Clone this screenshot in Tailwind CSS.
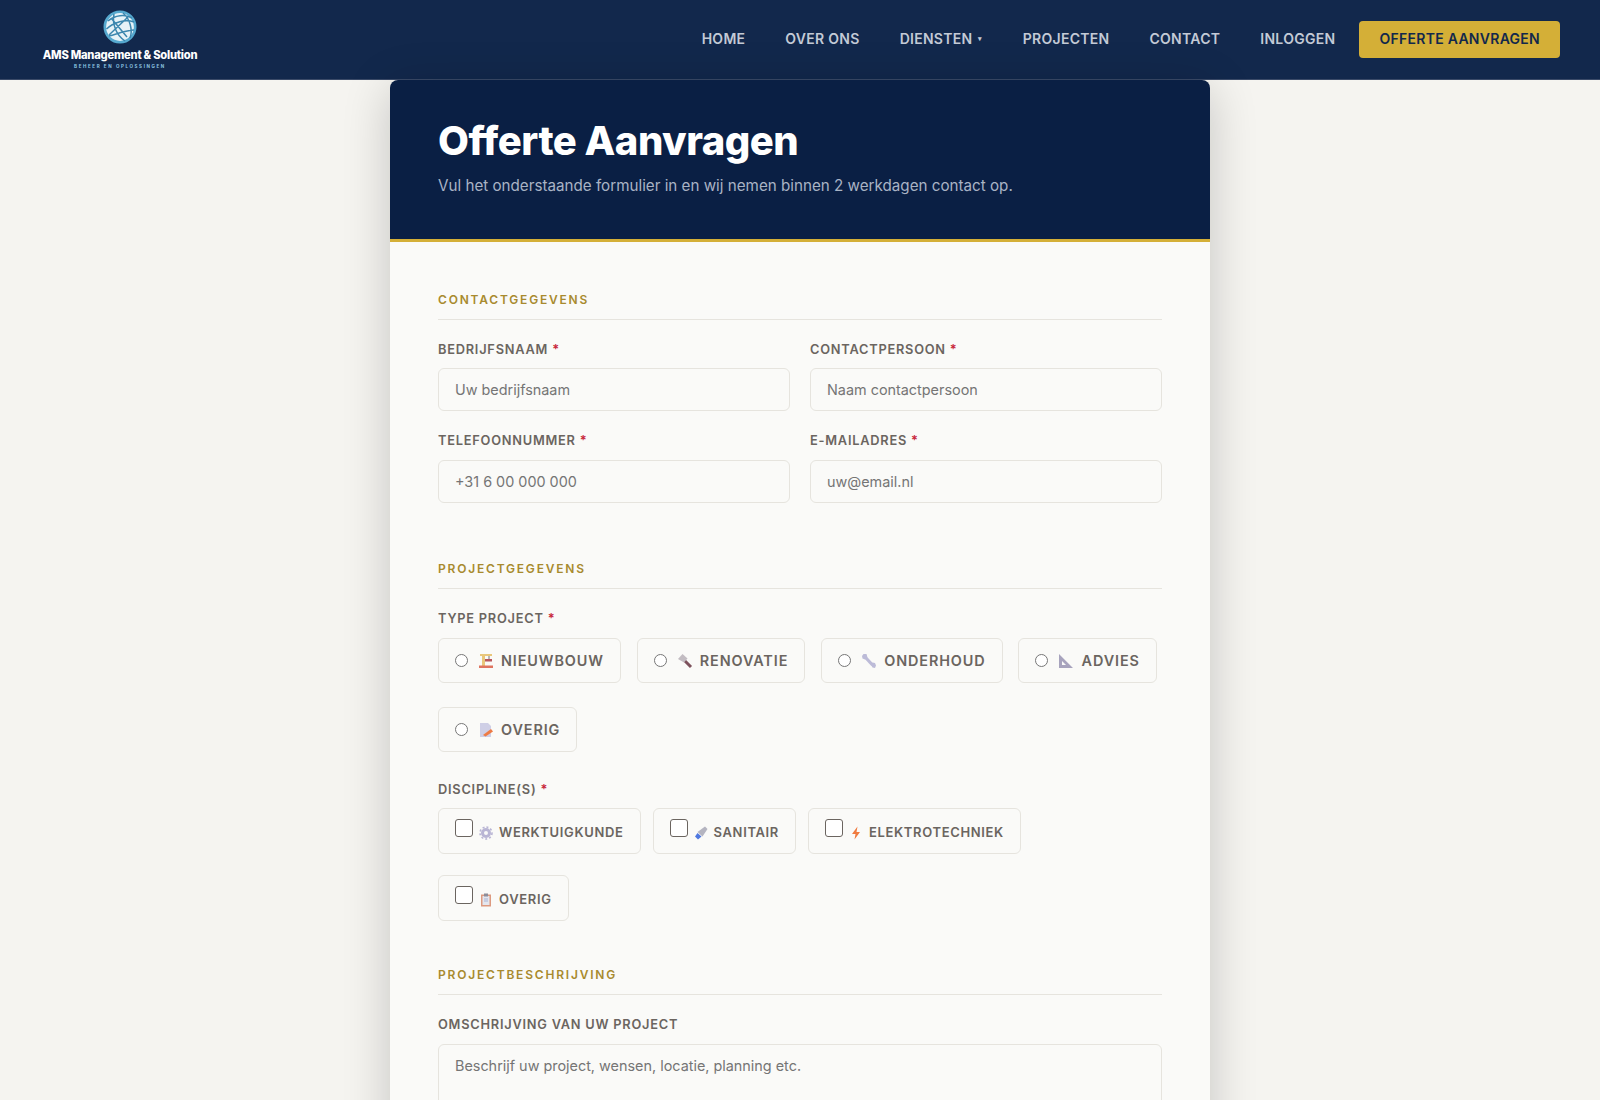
<!DOCTYPE html>
<html lang="nl">
<head>
    <meta charset="UTF-8" />
    <meta name="viewport" content="width=device-width, initial-scale=1.0" />
    <title>Offerte Aanvragen</title>
    <script src="https://cdn.jsdelivr.net/npm/@tailwindcss/browser@4"></script>
</head>
<body class="h-[1100px] overflow-hidden bg-[#f5f4f0] font-['Inter',sans-serif] text-[#6b6560]">
    <!-- Navigation -->
    <header class="h-20 bg-[#12284c] flex items-center justify-between pl-10 pr-10 border-b border-[#3a4a68]">
        <a href="#" class="block w-[160px] shrink-0 pt-[5px] text-center">
            <svg class="mx-auto block -mt-[5px]" width="34" height="34" viewBox="0 0 34 34" fill="none">
                <circle cx="17" cy="17" r="15.2" fill="#e6f2f7" stroke="#56a9cf" stroke-width="2.6" />
                <path d="M5 11C12 5 22 4 29 8M3.500 19C11 12 22 9 31 12M6 26C14 24 24 20 31 20M11 4C9 14 13 25 22 31M20 3C27 9 30 20 27 28M8 8L24 27M6 25L25 7" stroke="#3b86ae" stroke-width="1.500" />
            </svg>
            <div class="mt-[4px] text-[11.200px] leading-[14px] font-extrabold tracking-[-0.25px] text-white whitespace-nowrap">AMS Management &amp; Solution</div>
            <div class="mt-[2px] text-[4.500px] leading-[6px] font-bold tracking-[1.600px] text-[#8cc4e0] whitespace-nowrap">BEHEER EN OPLOSSINGEN</div>
        </a>
        <nav class="flex items-center gap-10 text-sm font-semibold tracking-[0.28px] text-[#c3cad6]">
            <a href="#" class="-mt-px">HOME</a>
            <a href="#" class="-mt-px">OVER ONS</a>
            <a href="#" class="-mt-px flex items-center gap-[6px]">DIENSTEN <span class="text-[7px]">▾</span></a>
            <a href="#" class="-mt-px">PROJECTEN</a>
            <a href="#" class="-mt-px">CONTACT</a>
            <a href="#" class="-mt-px">INLOGGEN</a>
            <a href="#" class="-ml-4 h-[37px] px-5 pb-px flex items-center rounded bg-[#d4af37] text-[#12284c] tracking-[0.28px]">OFFERTE AANVRAGEN</a>
        </nav>
    </header>

    <main class="w-[820px] mx-auto rounded-t-lg bg-[#fafaf8] shadow-[0_8px_48px_rgba(0,0,0,0.2)]">
        <!-- Card header -->
        <div class="h-[162px] rounded-t-lg bg-[#0a1f44] border-b-[3px] border-[#d4af37] px-12 pt-[37px]">
            <h1 class="text-[40px] leading-[48px] font-extrabold tracking-[-0.5px] text-white">Offerte Aanvragen</h1>
            <p class="mt-[9px] text-[15.200px] leading-6 text-[#a9b3c4]">Vul het onderstaande formulier in en wij nemen binnen 2 werkdagen contact op.</p>
        </div>

        <form class="px-12 pt-[50px]">
            <!-- Contactgegevens -->
            <h2 class="text-xs leading-[15px] font-semibold tracking-[1.800px] text-[#a88a2e] pb-3 border-b border-[#e6e4de]">CONTACTGEGEVENS</h2>
            <div class="mt-[22px] grid grid-cols-2 gap-x-5 gap-y-[22px]">
                <div>
                    <label class="block text-[12.800px] leading-[16px] font-semibold tracking-[0.77px] mb-[10px]">BEDRIJFSNAAM <span class="text-[#c8283c]">*</span></label>
                    <input class="block w-full h-[43px] rounded-md border border-[#e6e4de] bg-[#fafaf8] px-4 text-[14.400px] placeholder:text-[#757575]" placeholder="Uw bedrijfsnaam" />
                </div>
                <div>
                    <label class="block text-[12.800px] leading-[16px] font-semibold tracking-[0.77px] mb-[10px]">CONTACTPERSOON <span class="text-[#c8283c]">*</span></label>
                    <input class="block w-full h-[43px] rounded-md border border-[#e6e4de] bg-[#fafaf8] px-4 text-[14.400px] placeholder:text-[#757575]" placeholder="Naam contactpersoon" />
                </div>
                <div>
                    <label class="block text-[12.800px] leading-[16px] font-semibold tracking-[0.77px] mb-[11px]">TELEFOONNUMMER <span class="text-[#c8283c]">*</span></label>
                    <input class="block w-full h-[43px] rounded-md border border-[#e6e4de] bg-[#fafaf8] px-4 text-[14.400px] placeholder:text-[#757575]" placeholder="+31 6 00 000 000" />
                </div>
                <div>
                    <label class="block text-[12.800px] leading-[16px] font-semibold tracking-[0.77px] mb-[11px]">E-MAILADRES <span class="text-[#c8283c]">*</span></label>
                    <input class="block w-full h-[43px] rounded-md border border-[#e6e4de] bg-[#fafaf8] px-4 text-[14.400px] placeholder:text-[#757575]" placeholder="uw@email.nl" />
                </div>
            </div>

            <!-- Projectgegevens -->
            <h2 class="mt-[58px] text-xs leading-[15px] font-semibold tracking-[1.800px] text-[#a88a2e] pb-3 border-b border-[#e6e4de]">PROJECTGEGEVENS</h2>
            <label class="block mt-[22px] text-[12.800px] leading-[16px] font-semibold tracking-[0.77px]">TYPE PROJECT <span class="text-[#c8283c]">*</span></label>
            <div class="mt-[11px] flex flex-wrap gap-x-4 gap-y-6 text-[14.400px] font-semibold tracking-[0.9px]">
                <label class="h-[45px] px-4 flex items-center rounded-md border border-[#e6e4de]">
                    <input type="radio" name="type" class="w-[13px] h-[13px] mr-[10px] accent-[#6b6560]" />
                    <svg class="mr-[7px] opacity-80" width="16" height="16" viewBox="0 0 16 16"><path d="M4 1h3v12H4z" fill="#e6bb5c" /><path d="M2 1h12v2H2z" fill="#e6bb5c" /><path d="M11 3v3" stroke="#555" /><path d="M7 6h7v2.500H7z" fill="#a82e35" /><path d="M1 12.500h14V15H1z" fill="#d9533a" /></svg>
                    NIEUWBOUW
                </label>
                <label class="h-[45px] px-4 flex items-center rounded-md border border-[#e6e4de]">
                    <input type="radio" name="type" class="w-[13px] h-[13px] mr-[10px] accent-[#6b6560]" />
                    <svg class="mr-[7px] opacity-80" width="16" height="16" viewBox="0 0 16 16"><path d="M7 7l7 7" stroke="#5e2836" stroke-width="3" /><path d="M1 6l4.500-5 5 4.500-3.500 4z" fill="#b5adb5" /></svg>
                    RENOVATIE
                </label>
                <label class="h-[45px] px-4 flex items-center rounded-md border border-[#e6e4de]">
                    <input type="radio" name="type" class="w-[13px] h-[13px] mr-[10px] accent-[#6b6560]" />
                    <svg class="mr-[7px]" width="16" height="16" viewBox="0 0 16 16"><path d="M4.500 4.500l7 7.500" stroke="#bcbbd8" stroke-width="3.200" /><path d="M5.500 1L2.500 1 1 3l.5 2.500L4 6.500 6.500 4.500zM10 12l1.500 2.500 2.500.5 1-2.500-1-2.500-2.500-.5z" fill="#bcbbd8" /></svg>
                    ONDERHOUD
                </label>
                <label class="-ml-px h-[45px] px-4 flex items-center rounded-md border border-[#e6e4de]">
                    <input type="radio" name="type" class="w-[13px] h-[13px] mr-[10px] accent-[#6b6560]" />
                    <svg class="mr-[8px]" width="16" height="16" viewBox="0 0 16 16"><path fill-rule="evenodd" d="M1 1l14 14H1zM4 8v4h4z" fill="#a7a3bd" /></svg>
                    ADVIES
                </label>
                <label class="h-[45px] px-4 flex items-center rounded-md border border-[#e6e4de]">
                    <input type="radio" name="type" class="w-[13px] h-[13px] mr-[10px] accent-[#6b6560]" />
                    <svg class="mr-[7px]" width="16" height="16" viewBox="0 0 16 16"><path d="M2 1h8l3 3v11H2z" fill="#cfcfe6" /><path d="M5 13l8-6 2 2.500-7.500 5z" fill="#ee7b45" /></svg>
                    OVERIG
                </label>
            </div>

            <label class="block mt-[30px] text-[12.800px] leading-[16px] font-semibold tracking-[0.77px]">DISCIPLINE(S) <span class="text-[#c8283c]">*</span></label>
            <div class="mt-[10px] flex flex-wrap gap-x-3 gap-y-[21px] text-[13px] font-semibold tracking-[0.65px]">
                <label class="h-[46px] px-4 pt-1 flex items-center rounded-md border border-[#e6e4de]">
                    <input type="checkbox" class="w-[18px] h-[18px] -mt-[11px] mr-[6px] appearance-none rounded-[3px] border border-[#6b6560] bg-white" />
                    <svg class="opacity-80 mr-[6px]" width="14" height="14" viewBox="0 0 14 14"><circle cx="7" cy="7" r="3.500" fill="none" stroke="#a9a4cc" stroke-width="3" /><circle cx="7" cy="7" r="6" fill="none" stroke="#a9a4cc" stroke-width="1.600" stroke-dasharray="2 2" /></svg>
                    WERKTUIGKUNDE
                </label>
                <label class="h-[46px] px-4 pt-1 flex items-center rounded-md border border-[#e6e4de]">
                    <input type="checkbox" class="w-[18px] h-[18px] -mt-[11px] mr-[6px] appearance-none rounded-[3px] border border-[#6b6560] bg-white" />
                    <svg class="mr-[6px]" width="14" height="14" viewBox="0 0 14 14"><path d="M3.500 6L11 .500 13.500 3 8.500 10.500z" fill="#b4b4c0" /><path d="M1 10.500L3.500 7 7.500 10.500 4 13.500z" fill="#4f78e0" /></svg>
                    SANITAIR
                </label>
                <label class="h-[46px] px-4 pt-1 flex items-center rounded-md border border-[#e6e4de]">
                    <input type="checkbox" class="w-[18px] h-[18px] -mt-[11px] mr-[6px] appearance-none rounded-[3px] border border-[#6b6560] bg-white" />
                    <svg class="mr-[6px]" width="14" height="14" viewBox="0 0 14 14"><path d="M8.500 0.500L3 8h3.500L5.500 13.500 11 6H7.500z" fill="#f07b3f" /></svg>
                    ELEKTROTECHNIEK
                </label>
                <label class="h-[46px] px-4 pt-1 flex items-center rounded-md border border-[#e6e4de]">
                    <input type="checkbox" class="w-[18px] h-[18px] -mt-[11px] mr-[6px] appearance-none rounded-[3px] border border-[#6b6560] bg-white" />
                    <svg class="mr-[6px]" width="14" height="14" viewBox="0 0 14 14"><path d="M2 1.500h10v12H2z" fill="#dd9a80" /><path d="M3.500 3h7v9h-7z" fill="#e4e6ee" /><path d="M5 .500h4v3H5z" fill="#8d8d99" /><path d="M5 6h4M5 8h4" stroke="#a9b4d4" /></svg>
                    OVERIG
                </label>
            </div>

            <!-- Projectbeschrijving -->
            <h2 class="mt-[46px] text-xs leading-[15px] font-semibold tracking-[1.800px] text-[#a88a2e] pb-3 border-b border-[#e6e4de]">PROJECTBESCHRIJVING</h2>
            <label class="block mt-[22px] mb-[11px] text-[12.800px] leading-[16px] font-semibold tracking-[0.77px]">OMSCHRIJVING VAN UW PROJECT</label>
            <textarea rows="5" class="block w-full rounded-md border border-[#e6e4de] bg-[#fafaf8] px-4 py-[11px] text-[14.400px] leading-5 placeholder:text-[#757575]" placeholder="Beschrijf uw project, wensen, locatie, planning etc."></textarea>
        </form>
    </main>
</body>
</html>
